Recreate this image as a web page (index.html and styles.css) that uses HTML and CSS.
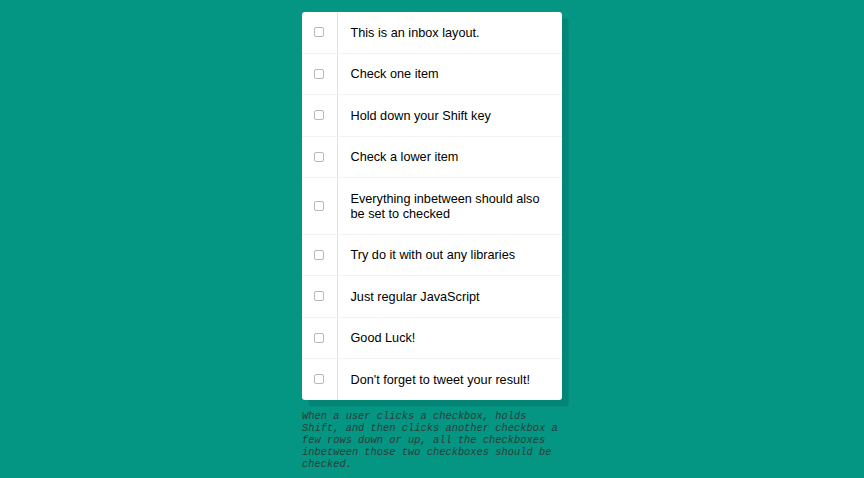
FILE: index.html
```html
<!DOCTYPE html>
<html lang="en">
<head>
<meta charset="UTF-8">
<title>Hold Shift to Check Multiple Checkboxes</title>
<link rel="stylesheet" href="styles.css">
</head>
<body>
<div class="inbox">
  <div class="item"><input type="checkbox"><p>This is an inbox layout.</p></div>
  <div class="item"><input type="checkbox"><p>Check one item</p></div>
  <div class="item"><input type="checkbox"><p>Hold down your Shift key</p></div>
  <div class="item"><input type="checkbox"><p>Check a lower item</p></div>
  <div class="item"><input type="checkbox"><p>Everything inbetween should also be set to checked</p></div>
  <div class="item"><input type="checkbox"><p>Try do it with out any libraries</p></div>
  <div class="item"><input type="checkbox"><p>Just regular JavaScript</p></div>
  <div class="item"><input type="checkbox"><p>Good Luck!</p></div>
  <div class="item"><input type="checkbox"><p>Don't forget to tweet your result!</p></div>
</div>
<p class="note">When a user clicks a checkbox, holds Shift, and then clicks another checkbox a few rows down or up, all the checkboxes inbetween those two checkboxes should be checked.</p>
</body>
</html>
```
FILE: styles.css
```css
html {
  background: #049683;
}
body {
  margin: 0;
  font-family: "Liberation Sans", Arial, sans-serif;
}
.inbox {
  width: 260px;
  margin: 12px auto 0;
  background: #ffffff;
  border-radius: 3px;
  box-shadow: 6.5px 6.5px 0 rgba(0, 0, 0, 0.1);
}
.item {
  display: flex;
  align-items: center;
  border-bottom: 1px solid #f3f3f3;
}
.item:last-child {
  border-bottom: 0;
}
.item input {
  -webkit-appearance: none;
  appearance: none;
  width: 10px;
  height: 10px;
  margin: 0 12.5px 0 12px;
  border: 1px solid #b8b8b8;
  border-radius: 2px;
  background: #fff;
  box-sizing: border-box;
  flex: none;
}
.item p {
  margin: 0;
  padding: 13.5px 13px 12px;
  flex: 1;
  font-size: 12.7px;
  line-height: 15px;
  color: #000;
  border-left: 1px solid #d1e2ff;
}
.note {
  width: 260px;
  margin: 10px auto 0;
  font-family: "Liberation Mono", "Courier New", monospace;
  font-style: italic;
  font-size: 10.4px;
  line-height: 12px;
  color: #2c3b38;
}
```
